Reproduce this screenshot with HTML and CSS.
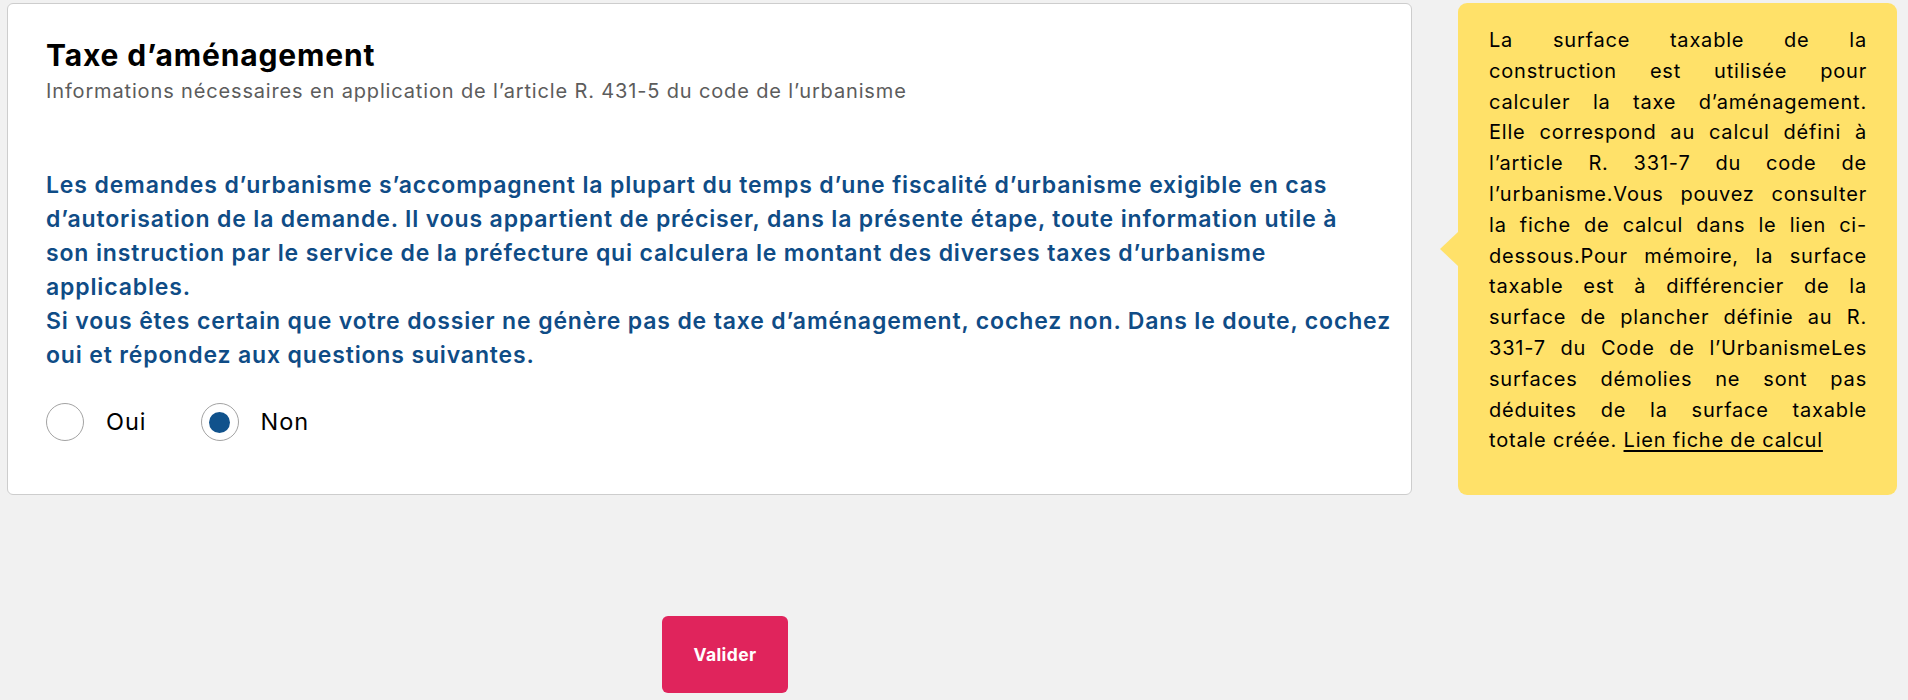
FILE: index.html
```html
<!DOCTYPE html>
<html lang="fr">
<head>
<meta charset="utf-8">
<title>Taxe d’aménagement</title>
<link rel="stylesheet" href="styles.css">
</head>
<body>
<div class="page">
  <div class="layout">
    <section class="card">
      <h1 class="card-title">Taxe d’aménagement</h1>
      <p class="card-subtitle">Informations nécessaires en application de l’article R. 431-5 du code de l’urbanisme</p>
      <div class="notice">
        <p>Les demandes d’urbanisme s’accompagnent la plupart du temps d’une fiscalité d’urbanisme exigible en cas<br>d’autorisation de la demande. Il vous appartient de préciser, dans la présente étape, toute information utile à<br>son instruction par le service de la préfecture qui calculera le montant des diverses taxes d’urbanisme<br>applicables.</p>
        <p>Si vous êtes certain que votre dossier ne génère pas de taxe d’aménagement, cochez non. Dans le doute, cochez<br>oui et répondez aux questions suivantes.</p>
      </div>
      <div class="radios">
        <label class="radio"><span class="radio-circle"></span><span class="radio-label">Oui</span></label>
        <label class="radio is-checked"><span class="radio-circle"><span class="radio-dot"></span></span><span class="radio-label">Non</span></label>
      </div>
    </section>
    <aside class="tip">
      <span class="tip-arrow"></span>
      <p class="tip-body">La surface taxable de la<br>construction est utilisée pour<br>calculer la taxe d’aménagement.<br>Elle correspond au calcul défini à<br>l’article R. 331-7 du code de<br>l’urbanisme.Vous pouvez consulter<br>la fiche de calcul dans le lien ci-<br>dessous.Pour mémoire, la surface<br>taxable est à différencier de la<br>surface de plancher définie au R.<br>331-7 du Code de l’UrbanismeLes<br>surfaces démolies ne sont pas<br>déduites de la surface taxable</p>
      <p class="tip-last">totale créée. <a class="tip-link" href="#">Lien fiche de calcul</a></p>
    </aside>
  </div>
  <div class="actions">
    <div class="actions-main">
      <button class="btn-primary" type="button">Valider</button>
    </div>
  </div>
</div>
</body>
</html>
```
FILE: styles.css
```css
* { box-sizing: border-box; }

html, body {
  margin: 0;
  padding: 0;
}

body {
  background: #f1f1f1;
  font-family: Inter, "Noto Sans", "Liberation Sans", sans-serif;
  color: #000;
}

.page {
  padding: 3px 11px 0 7px;
}

.layout {
  display: flex;
  align-items: stretch;
  gap: 46px;
}

.card {
  width: 1405px;
  flex: none;
  background: #fff;
  border: 1px solid #cdcdcd;
  border-radius: 6px;
  padding: 33px 20px 53px 38px;
}

.card-title {
  margin: 0;
  font-size: 30px;
  line-height: 36px;
  font-weight: 700;
  letter-spacing: 0.85px;
  color: #000;
}

.card-subtitle {
  margin: 5px 0 0;
  font-size: 20px;
  line-height: 26px;
  font-weight: 400;
  letter-spacing: 0.85px;
  color: #5c5c5c;
}

.notice {
  margin-top: 64px;
  color: #0f4c86;
  font-size: 23px;
  line-height: 34px;
  font-weight: 600;
  letter-spacing: 0.85px;
  white-space: nowrap;
}

.notice p {
  margin: 0;
}

.radios {
  margin-top: 31px;
  display: flex;
  align-items: center;
  gap: 54px;
}

.radio {
  display: flex;
  align-items: center;
  gap: 22px;
  cursor: pointer;
}

.radio-circle {
  width: 38px;
  height: 38px;
  border: 1px solid #a3a3a3;
  border-radius: 50%;
  background: #fff;
  display: flex;
  align-items: center;
  justify-content: center;
  flex: none;
}

.radio-dot {
  width: 21px;
  height: 21px;
  border-radius: 50%;
  background: #10528c;
}

.radio-label {
  font-size: 23.5px;
  line-height: 30px;
  letter-spacing: 1px;
  color: #000;
}

.tip {
  position: relative;
  width: 439px;
  flex: none;
  background: #ffe169;
  border-radius: 9px;
  padding: 22px 30px 20px 31px;
  font-size: 20px;
  line-height: 30.8px;
  letter-spacing: 0.8px;
  color: #000;
}

.tip-arrow {
  position: absolute;
  left: -18px;
  top: 229px;
  width: 0;
  height: 0;
  border-top: 17.5px solid transparent;
  border-bottom: 17.5px solid transparent;
  border-right: 18px solid #ffe169;
}

.tip-body {
  margin: 0;
  text-align: justify;
  text-align-last: justify;
}

.tip-last {
  margin: 0;
  text-align: left;
}

.tip-link {
  color: #000;
  text-decoration: underline;
  text-underline-offset: 3px;
}

.actions {
  display: flex;
  margin-top: 121px;
}

.actions-main {
  width: 1450px;
  margin-left: -7px;
  display: flex;
  justify-content: center;
}

.btn-primary {
  min-width: 126px;
  height: 77px;
  padding: 0 30px;
  border: none;
  border-radius: 6px;
  background: #e0245c;
  color: #fff;
  font-family: inherit;
  font-size: 17.5px;
  font-weight: 700;
  letter-spacing: 0.4px;
  cursor: pointer;
}
```
